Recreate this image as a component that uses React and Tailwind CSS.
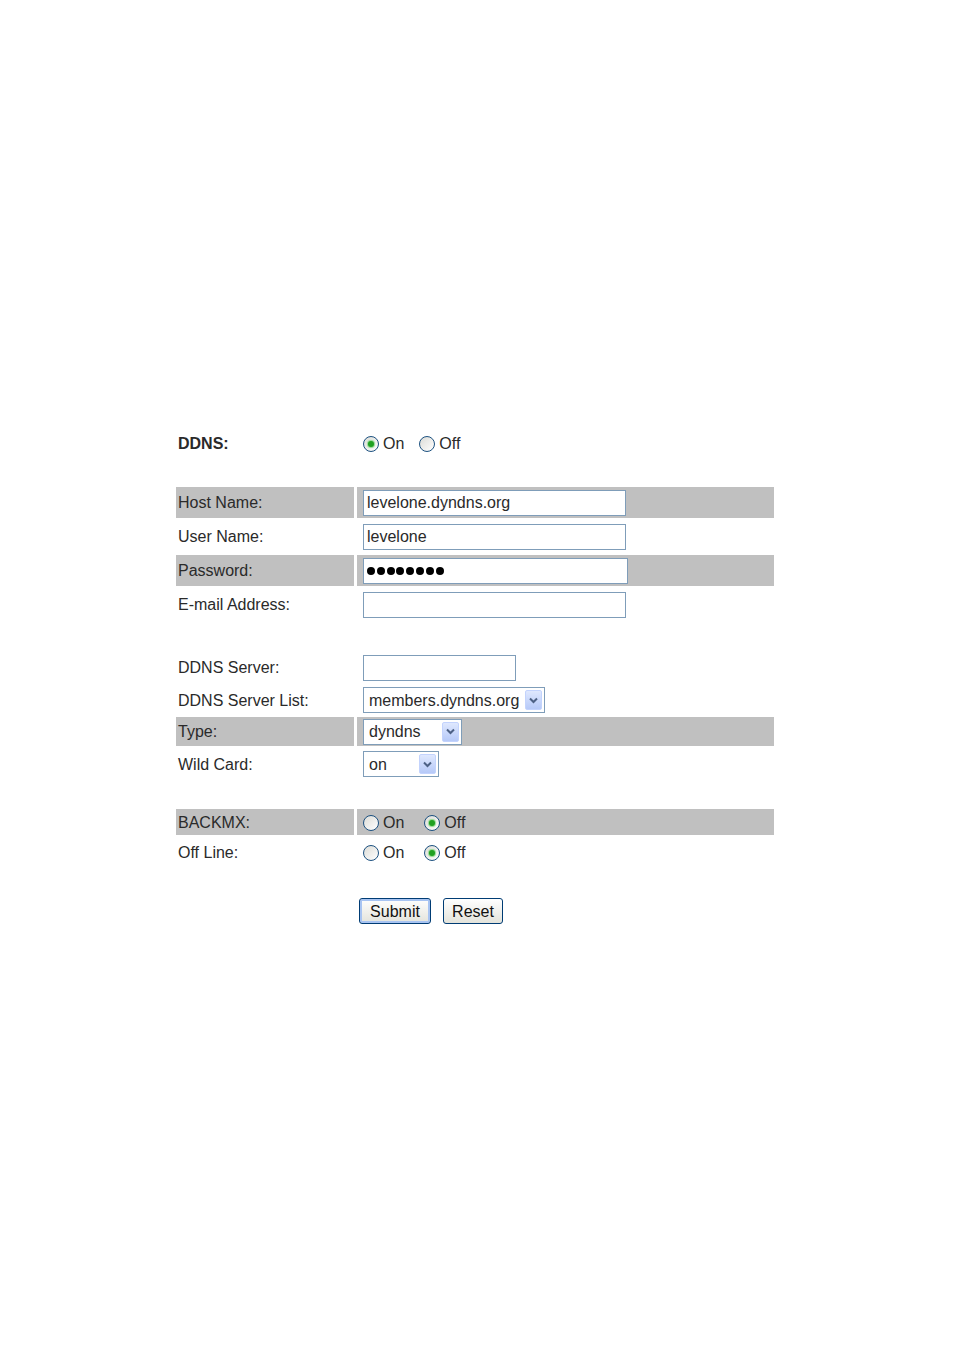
import React from "react";

const font = { fontFamily: '"Liberation Sans", Arial, sans-serif' };

const Radio = ({ checked }) => (
  <span className="flex h-[16px] w-[16px] shrink-0 items-center justify-center rounded-full border border-[#1c5180] bg-gradient-to-br from-[#dcdcd7] to-white">
    {checked && <span className="h-[6px] w-[6px] rounded-full bg-[#21a121] shadow-[0_0_1px_1px_#8fd98f]" />}
  </span>
);

const RadioPair = ({ on, gap = 20 }) => (
  <div className="flex items-center pt-[1px] text-[16px] text-[#2a2a2a]">
    <Radio checked={on} />
    <span className="ml-[4px]">On</span>
    <span className="flex" style={{ marginLeft: gap }}>
      <Radio checked={!on} />
    </span>
    <span className="ml-[4px]">Off</span>
  </div>
);

const Dots = () => (
  <div className="flex gap-[1.8px]">
    {[0, 1, 2, 3, 4, 5, 6, 7].map((i) => (
      <span key={i} className="h-[8px] w-[8px] rounded-full bg-black" />
    ))}
  </div>
);

const TextBox = ({ width, value = "", password }) => (
  <div
    className="flex h-[26px] items-center border border-[#7f9db9] bg-white px-[3px] pt-[1px] text-[16px] text-[#2a2a2a]"
    style={{ width }}
  >
    {password ? <Dots /> : value}
  </div>
);

const Select = ({ width, value }) => (
  <div
    className="flex h-[26px] items-center justify-between border border-[#7f9db9] bg-white pl-[5px] pr-[2px] text-[16px] text-[#2a2a2a]"
    style={{ width }}
  >
    <span className="pt-[1px]">{value}</span>
    <span className="flex h-[20px] w-[17px] items-center justify-center rounded-[2px] border border-[#c3d3fd] bg-gradient-to-b from-[#dfe8fe] to-[#b6c9f8]">
      <svg width="9" height="7" viewBox="0 0 9 7">
        <path d="M1 1.5 L4.5 5 L8 1.5" fill="none" stroke="#4d6185" strokeWidth="2" />
      </svg>
    </span>
  </div>
);

const Row = ({ label, grey, h, children, bold }) => (
  <div className="flex" style={{ height: h }}>
    <div
      className={`flex w-[178px] items-center pl-[2px] pt-[1px] text-[16px] ${bold ? "font-bold text-[15px]" : ""} text-[#2a2a2a] ${grey ? "bg-[#c0c0c0]" : ""}`}
    >
      {label}
    </div>
    <div className={`ml-[3px] flex flex-1 items-center pl-[6px] ${grey ? "bg-[#c0c0c0]" : ""}`}>{children}</div>
  </div>
);

export default function App() {
  return (
    <div className="min-h-[1352px] w-[954px] bg-white" style={font}>
      <div className="ml-[176px] w-[598px] pt-[430px]">
        <Row label="DDNS:" h={27} bold>
          <RadioPair on gap={15} />
        </Row>

        <div className="mt-[30px] flex flex-col gap-[2px]">
          <Row label="Host Name:" grey h={31}>
            <TextBox width={263} value="levelone.dyndns.org" />
          </Row>
          <Row label="User Name:" h={33}>
            <TextBox width={263} value="levelone" />
          </Row>
          <Row label="Password:" grey h={31}>
            <TextBox width={265} password />
          </Row>
          <Row label="E-mail Address:" h={33}>
            <TextBox width={263} />
          </Row>
        </div>

        <div className="mt-[30px] flex flex-col">
          <Row label="DDNS Server:" h={33}>
            <TextBox width={153} />
          </Row>
          <Row label="DDNS Server List:" h={32}>
            <Select width={182} value="members.dyndns.org" />
          </Row>
          <div className="mt-[1px]">
            <Row label="Type:" grey h={29}>
              <Select width={99} value="dyndns" />
            </Row>
          </div>
          <div className="mt-[2px]">
            <Row label="Wild Card:" h={32}>
              <Select width={76} value="on" />
            </Row>
          </div>
        </div>

        <div className="mt-[29px] flex flex-col gap-[2px]">
          <Row label="BACKMX:" grey h={26}>
            <RadioPair on={false} />
          </Row>
          <Row label="Off Line:" h={30}>
            <RadioPair on={false} />
          </Row>
        </div>

        <div className="ml-[183px] mt-[31px] flex gap-[12px]">
          <button className="h-[26px] w-[72px] rounded-[3px] border border-[#003c74] bg-gradient-to-b from-white to-[#e3e3db] pt-[1px] text-[16px] text-[#111] shadow-[inset_0_0_0_2px_#a8c4f2]">
            Submit
          </button>
          <button className="h-[26px] w-[60px] rounded-[3px] border border-[#003c74] bg-gradient-to-b from-white to-[#e3e3db] pt-[1px] text-[16px] text-[#111]">
            Reset
          </button>
        </div>
      </div>
    </div>
  );
}
